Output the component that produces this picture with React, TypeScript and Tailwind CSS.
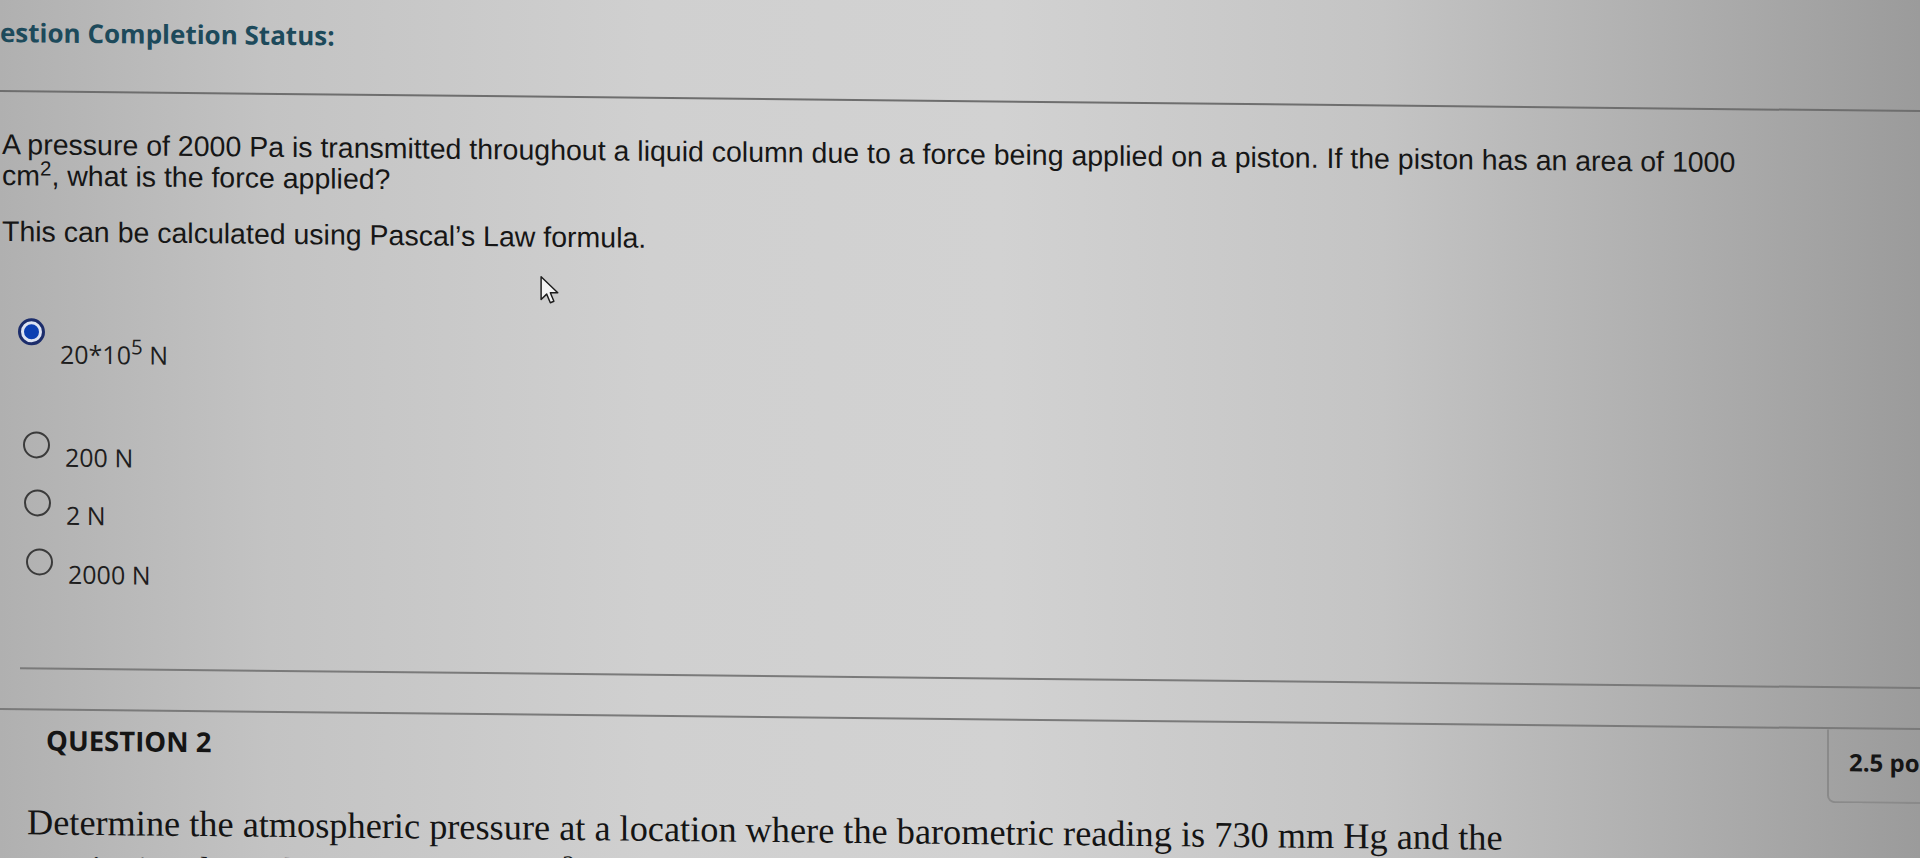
import React from "react"

type Choice = { label: React.ReactNode; selected?: boolean; gap: string; left: string; labelPad: string }

const choices: Choice[] = [
  { label: <>20*10<sup className="text-[82%]">5</sup> N</>, selected: true, gap: "mt-[71px]", left: "ml-[18px]", labelPad: "pt-[20px]" },
  { label: "200 N", gap: "mt-[63px]", left: "ml-[23px]", labelPad: "pt-[10px]" },
  { label: "2 N", gap: "mt-[18px]", left: "ml-[24px]", labelPad: "pt-[10px]" },
  { label: "2000 N", gap: "mt-[19px]", left: "ml-[26px]", labelPad: "pt-[10px]" },
]

function Radio({ selected }: { selected?: boolean }) {
  if (selected) {
    return (
      <span className="flex h-[27px] w-[27px] shrink-0 items-center justify-center rounded-full border-[3px] border-[#1c2d6b] bg-[#dde3f2]">
        <span className="block h-[15px] w-[15px] rounded-full bg-[#0c3fb2]" />
      </span>
    )
  }
  return <span className="block h-[27px] w-[27px] shrink-0 rounded-full border-2 border-[#3a3a3a]" />
}

function Cursor() {
  return (
    <svg className="absolute left-[539px] top-[275px]" width="22" height="30" viewBox="0 0 19 27" fill="none">
      <path d="M1.5 1.5 L1.5 22 L6.5 17.2 L9.8 25 L13 23.6 L9.8 16 L16.5 16 Z" fill="#f4f4f4" stroke="#1c1c1c" strokeWidth="1.3" strokeLinejoin="round" />
    </svg>
  )
}

export default function App() {
  return (
    <div className="relative h-[858px] w-[1920px] overflow-hidden bg-[linear-gradient(90deg,#b0b0b0_0%,#c3c3c3_14%,#d0d0d0_34%,#d2d2d2_52%,#c4c4c4_72%,#aaaaaa_90%,#9b9b9b_100%)]">
      <div className="origin-top-left skew-y-[0.6deg]">
        <div className="mt-[15px] text-[26px] font-bold leading-[34px] text-[#1d4a5b]" style={{ fontFamily: "'Open Sans', sans-serif" }}>
          estion Completion Status:
        </div>
        <div className="mt-[41px] h-[2px] w-full bg-[#6e6e6e]" />

        <div className="mt-[37px] pl-[2px] text-[28.5px] leading-[31px] text-[#161616]" style={{ fontFamily: "'Liberation Sans', Arial, sans-serif" }}>
          <p>
            A pressure of 2000 Pa is transmitted throughout a liquid column due to a force being applied on a piston. If the piston has an area of 1000
            <br />
            cm<sup className="text-[72%]">2</sup>, what is the force applied?
          </p>
          <p className="mt-[25px]">This can be calculated using Pascal’s Law formula.</p>
        </div>

        <div className="flex flex-col text-[25px] leading-[30px] text-[#1e1e1e]" style={{ fontFamily: "'Open Sans', sans-serif" }}>
          {choices.map((c, i) => (
            <div key={i} className={`flex items-start ${c.gap} ${c.left}`}>
              <Radio selected={c.selected} />
              <span className={`ml-[15px] ${c.labelPad}`}>{c.label}</span>
            </div>
          ))}
        </div>

        <div className="ml-[20px] mt-[79px] h-[2px] bg-[#7a7a7a]" />
        <div className="mt-[39px] h-[2px] w-full bg-[#7a7a7a]" />

        <div className="flex items-start" style={{ fontFamily: "'Open Sans', sans-serif" }}>
          <div className="flex-1 pl-[46px] pt-[13px] text-[27.5px] font-bold leading-[34px] text-[#151515]">QUESTION 2</div>
          <div className="-mr-[67px] h-[74px] w-[160px] shrink-0 rounded-bl-[8px] border-b-2 border-l-2 border-[#8a8a8a] pl-[20px] pt-[16px] text-[24px] font-bold leading-[34px] text-[#151515]">
            2.5 points
          </div>
        </div>

        <div className="mt-[15px] pl-[27px] text-[36.3px] leading-[46px] text-[#141414]" style={{ fontFamily: "'Liberation Serif', 'Times New Roman', serif" }}>
          <p>Determine the atmospheric pressure at a location where the barometric reading is 730 mm Hg and the</p>
          <p>gravitational acceleration is 9.81 m/s<sup className="text-[70%]">2</sup>. Take the density of mercury to be 13,600 kg/m<sup className="text-[70%]">3</sup>.</p>
        </div>
      </div>
      <Cursor />
    </div>
  )
}
